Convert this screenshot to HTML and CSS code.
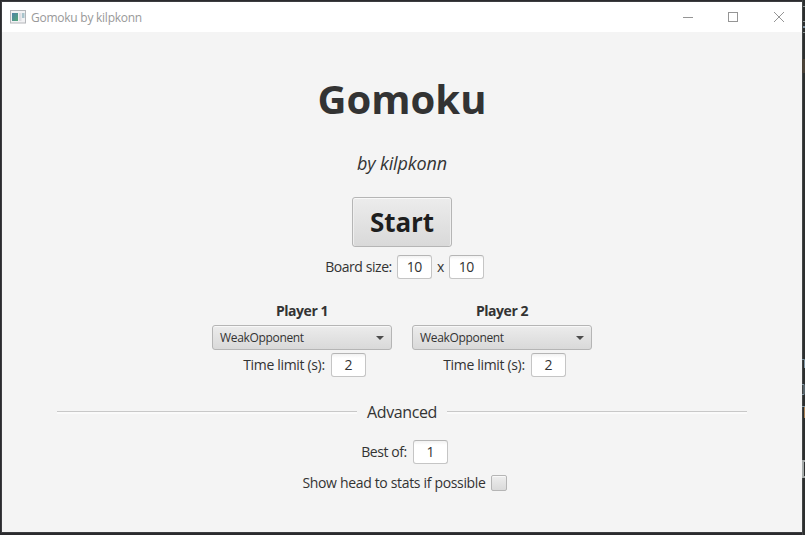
FILE: index.html
```
<!DOCTYPE html>
<html lang="en">
<head>
<meta charset="utf-8">
<title>Gomoku by kilpkonn</title>
<link rel="stylesheet" href="styles.css">
</head>
<body>
<div class="window">
  <header class="titlebar">
    <svg class="app-icon" width="16" height="14" viewBox="0 0 16 14">
      <defs><linearGradient id="pane" x1="0" y1="0" x2="1" y2="1"><stop offset="0" stop-color="#4f82a8"/><stop offset="1" stop-color="#55a878"/></linearGradient></defs>
      <rect x=".5" y=".5" width="15" height="12.5" fill="#f2f2f4" stroke="#b4b6ba"/>
      <rect x="2" y="3" width="6" height="8" fill="url(#pane)"/>
      <rect x="9" y="3" width="2.5" height="8" fill="#dddde2"/>
      <rect x="12" y="3" width="2.5" height="5" fill="#a9c4cc"/>
    </svg>
    <span class="caption">Gomoku by kilpkonn</span>
    <svg class="controls" width="104" height="12" viewBox="0 0 104 12" fill="none" stroke="#959595">
      <path d="M1 6.500H11"/>
      <rect x="46.500" y="1.500" width="9" height="9"/>
      <path d="M92 1L102 11M102 1L92 11"/>
    </svg>
  </header>
  <main class="content">
    <h1 class="title">Gomoku</h1>
    <p class="author">by kilpkonn</p>
    <button class="start"><span>Start</span></button>
    <div class="row board"><span class="label size-label">Board size:</span><span class="field">10</span><span class="label">x</span><span class="field">10</span></div>
    <div class="players">
      <section class="player">
        <h2 class="name">Player 1</h2>
        <div class="combo"><span>WeakOpponent</span><i class="arrow"></i></div>
        <div class="row"><span class="label">Time limit (s):</span><span class="field">2</span></div>
      </section>
      <section class="player">
        <h2 class="name">Player 2</h2>
        <div class="combo"><span>WeakOpponent</span><i class="arrow"></i></div>
        <div class="row"><span class="label">Time limit (s):</span><span class="field">2</span></div>
      </section>
    </div>
    <div class="divider"><span>Advanced</span></div>
    <div class="row best"><span class="label size-label">Best of:</span><span class="field">1</span></div>
    <div class="row stats"><span class="label">Show head to stats if possible</span><span class="check"></span></div>
  </main>
</div>
<div class="backdrop">
  <svg width="3" height="535" viewBox="0 0 3 535">
    <rect width="3" height="535" fill="#2c2f2f"/>
    <rect width="1" height="535" fill="#424545"/>
    <path d="M1 6.500H3M1 21.500H3M1 32.500H3" stroke="#8c9494"/>
    <path d="M1 27H3" stroke="#7d91a0" stroke-width="2"/>
    <path d="M0 359.500H2.500V368M0 384.500H2V394.500H0M0 406.500H3" fill="none" stroke="#8298a5"/>
    <path d="M2.500 407V418" stroke="#a98258"/>
    <path d="M3 461H1V477H3" fill="none" stroke="#a5aaa9" stroke-width="2"/>
    <rect y="59" width="3" height="14" fill="#4a4238"/>
  </svg>
</div>
</body>
</html>
```
FILE: styles.css
```
* { box-sizing: border-box; }
body {
  margin: 0;
  width: 805px;
  height: 535px;
  overflow: hidden;
  display: flex;
  background: #2b2b2e;
  color: #333;
  font-family: "Open Sans", "Noto Sans", sans-serif;
}
.window {
  width: 800px;
  height: 530px;
  margin: 2px 0 0 2px;
  background: #f4f4f4;
  box-shadow: 0 0 0 1px #3c3d40;
}
.backdrop { width: 3px; height: 535px; }
.backdrop svg { display: block; }
.titlebar {
  height: 30px;
  display: flex;
  align-items: center;
  padding: 0 16px 0 8px;
  background: #fff;
}
.app-icon { margin-right: 5px; }
.caption { font-size: 12px; letter-spacing: -.25px; color: #999; white-space: nowrap; }
.controls { margin-left: auto; }
.content { display: flex; flex-direction: column; align-items: center; }
.title { margin: 37px 0 0; height: 60px; font-size: 40px; line-height: 60px; font-weight: 700; }
.author { margin: 21px 0 0; height: 27px; font-size: 18px; line-height: 26px; font-style: italic; letter-spacing: -.1px; }
.start {
  width: 100px;
  height: 50px;
  margin: 20px 0 0;
  padding: 0;
  border: 1px solid #b5b5b5;
  border-radius: 3px;
  background: linear-gradient(#ececec, #d9d9d9);
  box-shadow: inset 0 1px #f8f8f8, inset 1px 0 #efefef, inset -1px 0 #efefef;
  color: #1e1e1e;
  font-family: inherit;
  font-size: 26px;
  line-height: 48px;
  font-weight: 700;
  letter-spacing: -.1px;
}
.row { display: flex; align-items: center; justify-content: center; gap: 5px; height: 24px; }
.label { font-size: 14px; line-height: 20px; padding-bottom: 1px; letter-spacing: -.33px; white-space: nowrap; }
.size-label { letter-spacing: -.43px; }
.field {
  width: 35px;
  height: 24px;
  border: 1px solid #c5c5c5;
  border-top-color: #b5b5b5;
  border-radius: 3px;
  background: linear-gradient(#f2f2f2, #fff 4px);
  text-align: center;
  font-size: 14px;
  line-height: 21px;
  letter-spacing: -.4px;
}
.board { margin-top: 8px; padding-left: 5px; }
.players { display: flex; gap: 20px; margin-top: 21px; }
.player { width: 180px; }
.name { margin: 0; height: 25px; font-size: 14px; line-height: 21px; letter-spacing: -.45px; text-align: center; }
.combo {
  height: 25px;
  margin-bottom: 3px;
  display: flex;
  align-items: center;
  justify-content: space-between;
  padding: 0 7px;
  border: 1px solid #b5b5b5;
  border-radius: 3px;
  background: linear-gradient(#ececec, #d9d9d9);
  box-shadow: inset 0 1px #f8f8f8;
  font-size: 12px;
  letter-spacing: -.33px;
}
.arrow { border: 4px solid transparent; border-top-color: #4d4d4d; border-bottom: 0; }
.player .row, .best { gap: 6px; padding-left: 5px; }
.divider {
  display: flex;
  align-items: center;
  gap: 10px;
  width: 690px;
  height: 24px;
  margin-top: 23px;
  font-size: 16px;
  letter-spacing: -.4px;
}
.divider::before, .divider::after {
  content: "";
  flex: 1;
  height: 2px;
  border-top: 1px solid #c8c8c8;
  background: #fafafa;
}
.best { margin-top: 16px; }
.stats { margin-top: 7px; padding-left: 5px; }
.check {
  width: 16px;
  height: 16px;
  border: 1px solid #b5b5b5;
  border-radius: 2px;
  background: linear-gradient(#eee, #dadada);
  box-shadow: inset 0 1px #f8f8f8;
}
```
